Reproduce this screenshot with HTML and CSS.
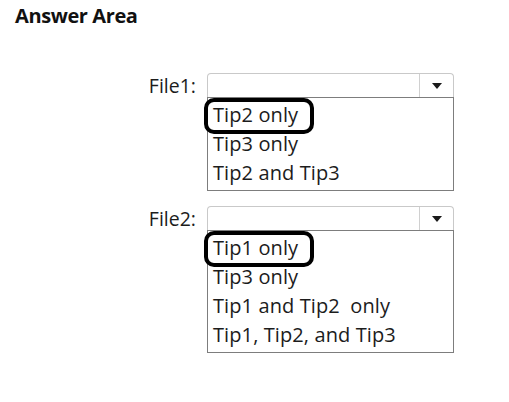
FILE: index.html
```html
<!DOCTYPE html>
<html>
<head>
<meta charset="utf-8">
<link rel="stylesheet" href="styles.css">
</head>
<body>
<h1 class="title">Answer Area</h1>
<div class="form">
  <div class="field">
    <div class="label">File1:</div>
    <div class="control">
      <div class="select"><span class="value"></span><span class="arrow"><span class="tri"></span></span></div>
      <ul class="list">
        <li class="item chosen">Tip2 only</li>
        <li class="item">Tip3 only</li>
        <li class="item">Tip2 and Tip3</li>
      </ul>
    </div>
  </div>
  <div class="field">
    <div class="label">File2:</div>
    <div class="control">
      <div class="select"><span class="value"></span><span class="arrow"><span class="tri"></span></span></div>
      <ul class="list">
        <li class="item chosen">Tip1 only</li>
        <li class="item">Tip3 only</li>
        <li class="item">Tip1 and Tip2&nbsp; only</li>
        <li class="item">Tip1, Tip2, and Tip3</li>
      </ul>
    </div>
  </div>
</div>
</body>
</html>
```

FILE: styles.css
```css
html, body {
  margin: 0;
  padding: 0;
  background: #ffffff;
}
body {
  width: 509px;
  height: 402px;
  overflow: hidden;
  font-family: "Open Sans", "Noto Sans", sans-serif;
  color: #1c1c1c;
}
.title {
  margin: 0;
  padding: 4px 0 0 15px;
  font-size: 20px;
  line-height: 24px;
  font-weight: 700;
  letter-spacing: -0.4px;
  color: #111;
}
.form {
  display: flex;
  flex-direction: column;
  gap: 15px;
  padding-left: 134px;
  margin-top: 45px;
}
.field {
  display: flex;
  gap: 11px;
  align-items: flex-start;
}
.label {
  width: 62px;
  text-align: right;
  font-size: 19.5px;
  line-height: 26px;
  height: 24px;
}
.control {
  width: 247px;
  display: flex;
  flex-direction: column;
}
.select {
  box-sizing: border-box;
  height: 24px;
  border: 1px solid #c9c9c9;
  border-bottom: 0;
  border-radius: 4px 4px 0 0;
  display: flex;
}
.value {
  flex: 1;
}
.arrow {
  width: 33px;
  border-left: 1px solid #d0d0d0;
  display: flex;
  align-items: center;
  justify-content: center;
}
.tri {
  width: 0;
  height: 0;
  border-left: 5px solid transparent;
  border-right: 5px solid transparent;
  border-top: 6px solid #1a1a1a;
}
.list {
  list-style: none;
  margin: 0;
  padding: 2px 0 3px;
  border: 1px solid #7d7d7d;
}
.item {
  position: relative;
  height: 29px;
  line-height: 29px;
  padding-left: 5px;
  font-size: 20px;
  letter-spacing: 0.1px;
  white-space: nowrap;
}
.chosen::after {
  content: "";
  position: absolute;
  left: -4px;
  top: -2px;
  width: 102px;
  height: 28px;
  border: 4px solid #000;
  border-radius: 10px;
}
```
